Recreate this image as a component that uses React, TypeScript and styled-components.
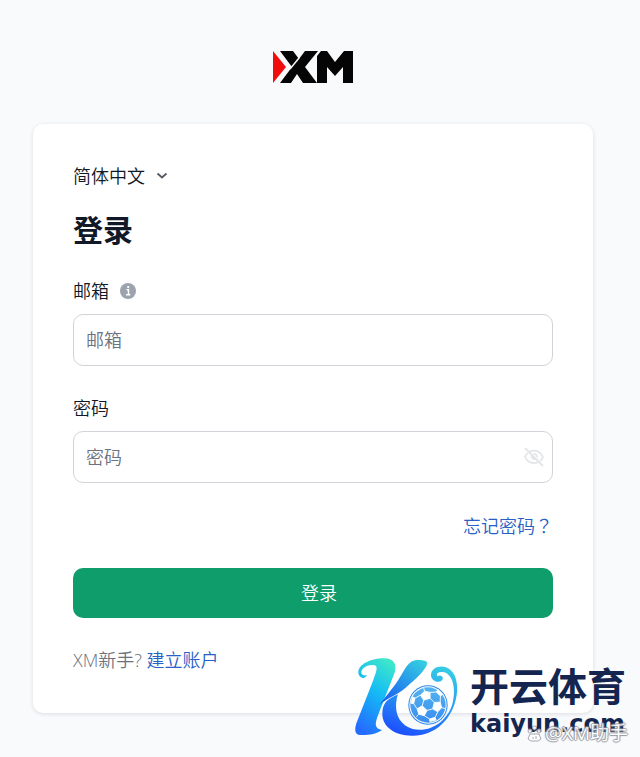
import React from "react";
import styled, { createGlobalStyle } from "styled-components";

const sans = `"Open Sans", "Noto Sans CJK SC", sans-serif`;

const GlobalStyle = createGlobalStyle`
  * { box-sizing: border-box; }
  body {
    margin: 0;
    background: #f9fafc;
    color: #111827;
    font: 350 18px/24px ${sans};
  }
  input, button, select { font: inherit; color: inherit; }
`;

const Page = styled.main`
  position: relative;
  min-height: 100vh;
  padding: 50px 47px 44px 33px;
  display: flex;
  flex-direction: column;
  align-items: center;
`;

const Logo = styled.svg`
  width: 80px;
  height: 34px;
  margin-bottom: 40px;
`;

const Card = styled.form`
  width: 100%;
  max-width: 560px;
  padding: 40px 40px 41px;
  display: flex;
  flex-direction: column;
  background: #fff;
  border-radius: 10px;
  box-shadow: 0 1px 4px rgba(17, 24, 39, 0.13);
`;

const Language = styled.label`
  display: flex;
  align-items: center;
  align-self: flex-start;
  gap: 11px;
`;

const LanguageSelect = styled.select`
  appearance: none;
  height: 24px;
  padding: 0;
  border: 0;
  background: transparent;
`;

const Title = styled.h1`
  margin: 24px 0 31px;
  font-size: 30px;
  line-height: 36px;
  font-weight: 700;
`;

const Field = styled.div`
  display: flex;
  flex-direction: column;
  gap: 11px;
  margin-bottom: 30px;
`;

const LabelRow = styled.div`
  display: flex;
  align-items: center;
  gap: 11px;
  height: 24px;
`;

const InputBox = styled.div`
  display: flex;
  align-items: center;
  height: 52px;
  padding: 0 8px 0 12px;
  border: 1px solid #d1d3d8;
  border-radius: 10px;
  background: #fff;
`;

const TextInput = styled.input`
  flex: 1;
  min-width: 0;
  height: 100%;
  padding: 0;
  border: 0;
  outline: 0;
  background: transparent;
  &::placeholder { color: #6b7280; opacity: 1; }
`;

const IconButton = styled.button`
  display: flex;
  padding: 0;
  border: 0;
  background: transparent;
`;

const Link = styled.a`
  color: #2860c5;
  text-decoration: none;
`;

const ForgotRow = styled.div`
  display: flex;
  justify-content: flex-end;
  margin-bottom: 31px;
  font-family: "Noto Sans CJK TC", sans-serif;
`;

const SubmitButton = styled.button`
  height: 50px;
  margin-bottom: 30px;
  padding: 0 0 0 12px;
  border: 0;
  border-radius: 10px;
  background: #0f9d6c;
  color: #fff;
`;

const SignUp = styled.p`
  margin: 0;
  color: #6b7280;
`;

const Brand = styled.aside`
  position: absolute;
  right: 14px;
  bottom: 19px;
  display: flex;
  align-items: flex-end;
  gap: 12px;
`;

const BrandMark = styled.svg`
  width: 104px;
  height: 82px;
`;

const BrandText = styled.div`
  display: flex;
  flex-direction: column;
  color: #14264f;
  font-weight: 700;
`;

const BrandName = styled.span`
  font-size: 39px;
  line-height: 48px;
`;

const BrandDomain = styled.span`
  font-family: "DejaVu Sans", sans-serif;
  font-size: 24px;
  line-height: 28px;
`;

const Watermark = styled.div`
  position: absolute;
  right: 12px;
  bottom: 12px;
  display: flex;
  align-items: center;
  gap: 3px;
  color: #fff;
  opacity: 0.85;
  font-size: 19px;
  font-weight: 400;
  text-shadow: 1px 0 1px #858991, -1px 0 1px #858991, 0 1px 1px #858991, 0 -1px 1px #858991;
`;

const panelAngles = [0, 120, 240];

function Football() {
  return (
    <g>
      <circle cx="248" cy="195" r="59" fill="#2b86f0" />
      <circle cx="248" cy="195" r="56" fill="#fff" />
      <circle cx="248" cy="195" r="53" fill="url(#ball)" />
      <g transform="translate(249 193) rotate(14)" stroke="#fff" strokeWidth="2.500" strokeLinejoin="round">
        {panelAngles.map((angle) => (
          <g key={angle} transform={`rotate(${angle})`}>
            <path d="M16-10V10L33 15L41 0L33-15Z" fill="#fff" />
            <path d="M41 0H52M33 15L29 33M33-15L29-33M16 10L0 19" fill="none" />
            <path d="M29 33L14 42L17 49L34 40Z" fill="#fff" />
          </g>
        ))}
      </g>
    </g>
  );
}

function KMark() {
  return (
    <BrandMark viewBox="26 48 312 246" aria-hidden="true">
      <defs>
        <linearGradient id="stem" x1="0.7" y1="0" x2="0.3" y2="1">
          <stop offset="0" stopColor="#3ce6cb" />
          <stop offset="0.42" stopColor="#15bdf4" />
          <stop offset="1" stopColor="#246bff" />
        </linearGradient>
        <linearGradient id="arm" x1="0.9" y1="0" x2="0.1" y2="1">
          <stop offset="0" stopColor="#35d0e1" />
          <stop offset="1" stopColor="#1958f4" />
        </linearGradient>
        <linearGradient id="swoosh" x1="0.7" y1="0" x2="0.3" y2="1">
          <stop offset="0" stopColor="#35cae5" />
          <stop offset="0.55" stopColor="#268ff2" />
          <stop offset="1" stopColor="#1d4fff" />
        </linearGradient>
        <linearGradient id="ball" x1="0" y1="0" x2="0" y2="1">
          <stop offset="0" stopColor="#53b4ef" />
          <stop offset="1" stopColor="#3a8df0" />
        </linearGradient>
      </defs>
      <path fill="url(#stem)" d="M65 105C58 122 38 113 39 95C42 70 83 54 117 55C151 56 156 80 145 106L103 213C94 237 79 265 110 270C95 282 67 286 43 285C25 283 28 262 36 242L82 125C93 96 99 79 88 76C71 71 48 83 48 97C48 106 57 108 65 105Z" />
      <path fill="url(#arm)" d="M102 195L148 136C174 101 183 66 209 61C224 58 247 61 246 70C243 88 212 117 181 143C153 167 128 172 102 195Z" />
      <path fill="url(#swoosh)" d="M158 163C145 202 151 250 202 267C257 280 310 239 322 188C333 139 320 99 292 96C278 94 270 103 277 109C283 104 295 108 292 118C286 132 257 126 257 105C257 84 281 75 300 81C329 90 340 127 334 165C323 237 270 287 202 287C149 288 110 261 111 220C111 190 127 176 158 163Z" />
      <Football />
    </BrandMark>
  );
}

export default function App() {
  return (
    <>
      <GlobalStyle />
      <Page>
        <Logo viewBox="0 0 80 34" role="img" aria-label="XM">
          <path d="M0 1L13 17L0 33Z" fill="#f20d0d" />
          <path d="M7 1H20L26 9L32 1H45L32 17L44 33H30L24 24L18 33H7L19 17Z" fill="#050505" />
          <path d="M44 33V6L48 1H54L62 12L71 1H80V33H70V17L62 26L54 17V33Z" fill="#050505" />
          <path d="M17 19L26 8" stroke="#f9fafc" strokeWidth="1.500" />
        </Logo>
        <Card onSubmit={(event) => event.preventDefault()}>
          <Language>
            <LanguageSelect aria-label="语言">
              <option>简体中文</option>
            </LanguageSelect>
            <svg width="12" height="12" viewBox="0 0 12 12" fill="none" stroke="#555a62" strokeWidth="1.800" aria-hidden="true">
              <path d="M1.500 3.500L6 7.500L10.500 3.500" />
            </svg>
          </Language>
          <Title>登录</Title>
          <Field>
            <LabelRow>
              <label htmlFor="email">邮箱</label>
              <svg width="16" height="16" viewBox="0 0 17 17" aria-hidden="true">
                <circle cx="8.500" cy="8.500" r="8.500" fill="#9ca3af" />
                <path d="M7 7.200H9V12M6.500 12.500H11" fill="none" stroke="#fff" strokeWidth="1.500" />
                <circle cx="8.700" cy="4.300" r="1.200" fill="#fff" />
              </svg>
            </LabelRow>
            <InputBox>
              <TextInput id="email" type="email" placeholder="邮箱" />
            </InputBox>
          </Field>
          <Field>
            <LabelRow>
              <label htmlFor="password">密码</label>
            </LabelRow>
            <InputBox>
              <TextInput id="password" type="password" placeholder="密码" />
              <IconButton type="button" aria-label="显示密码">
                <svg width="20" height="20" viewBox="0 0 20 20" fill="none" stroke="#e3e5e9" strokeWidth="1.800">
                  <path d="M6 4.600C12 2 17 5.500 19 10C18.300 11.700 17.200 13 16 14M13.700 15.300C8 17.500 3 14.500 1 10C1.700 8.200 2.800 6.900 4 6M8 8A3 3 0 0 0 12 12M9.500 7A3 3 0 0 1 13 10.500M1 1L19 19" />
                </svg>
              </IconButton>
            </InputBox>
          </Field>
          <ForgotRow>
            <Link href="#forgot" lang="zh-TW">忘记密码？</Link>
          </ForgotRow>
          <SubmitButton type="submit">登录</SubmitButton>
          <SignUp>
            XM新手? <Link href="#register">建立账户</Link>
          </SignUp>
        </Card>
        <Brand>
          <KMark />
          <BrandText>
            <BrandName>开云体育</BrandName>
            <BrandDomain>kaiyun.com</BrandDomain>
          </BrandText>
        </Brand>
        <Watermark>
          <svg width="15" height="17" viewBox="0 0 15 17" fill="#fff" stroke="#989ca3" strokeWidth="1" aria-hidden="true">
            <circle cx="3" cy="6" r="2" />
            <circle cx="7.500" cy="3" r="2" />
            <circle cx="12" cy="6" r="2" />
            <path d="M3 9H12L14 14L11 16H4L1 14Z" />
            <path d="M5 13H7M9 11V14" />
          </svg>
          <span>@XM助手</span>
        </Watermark>
      </Page>
    </>
  );
}
